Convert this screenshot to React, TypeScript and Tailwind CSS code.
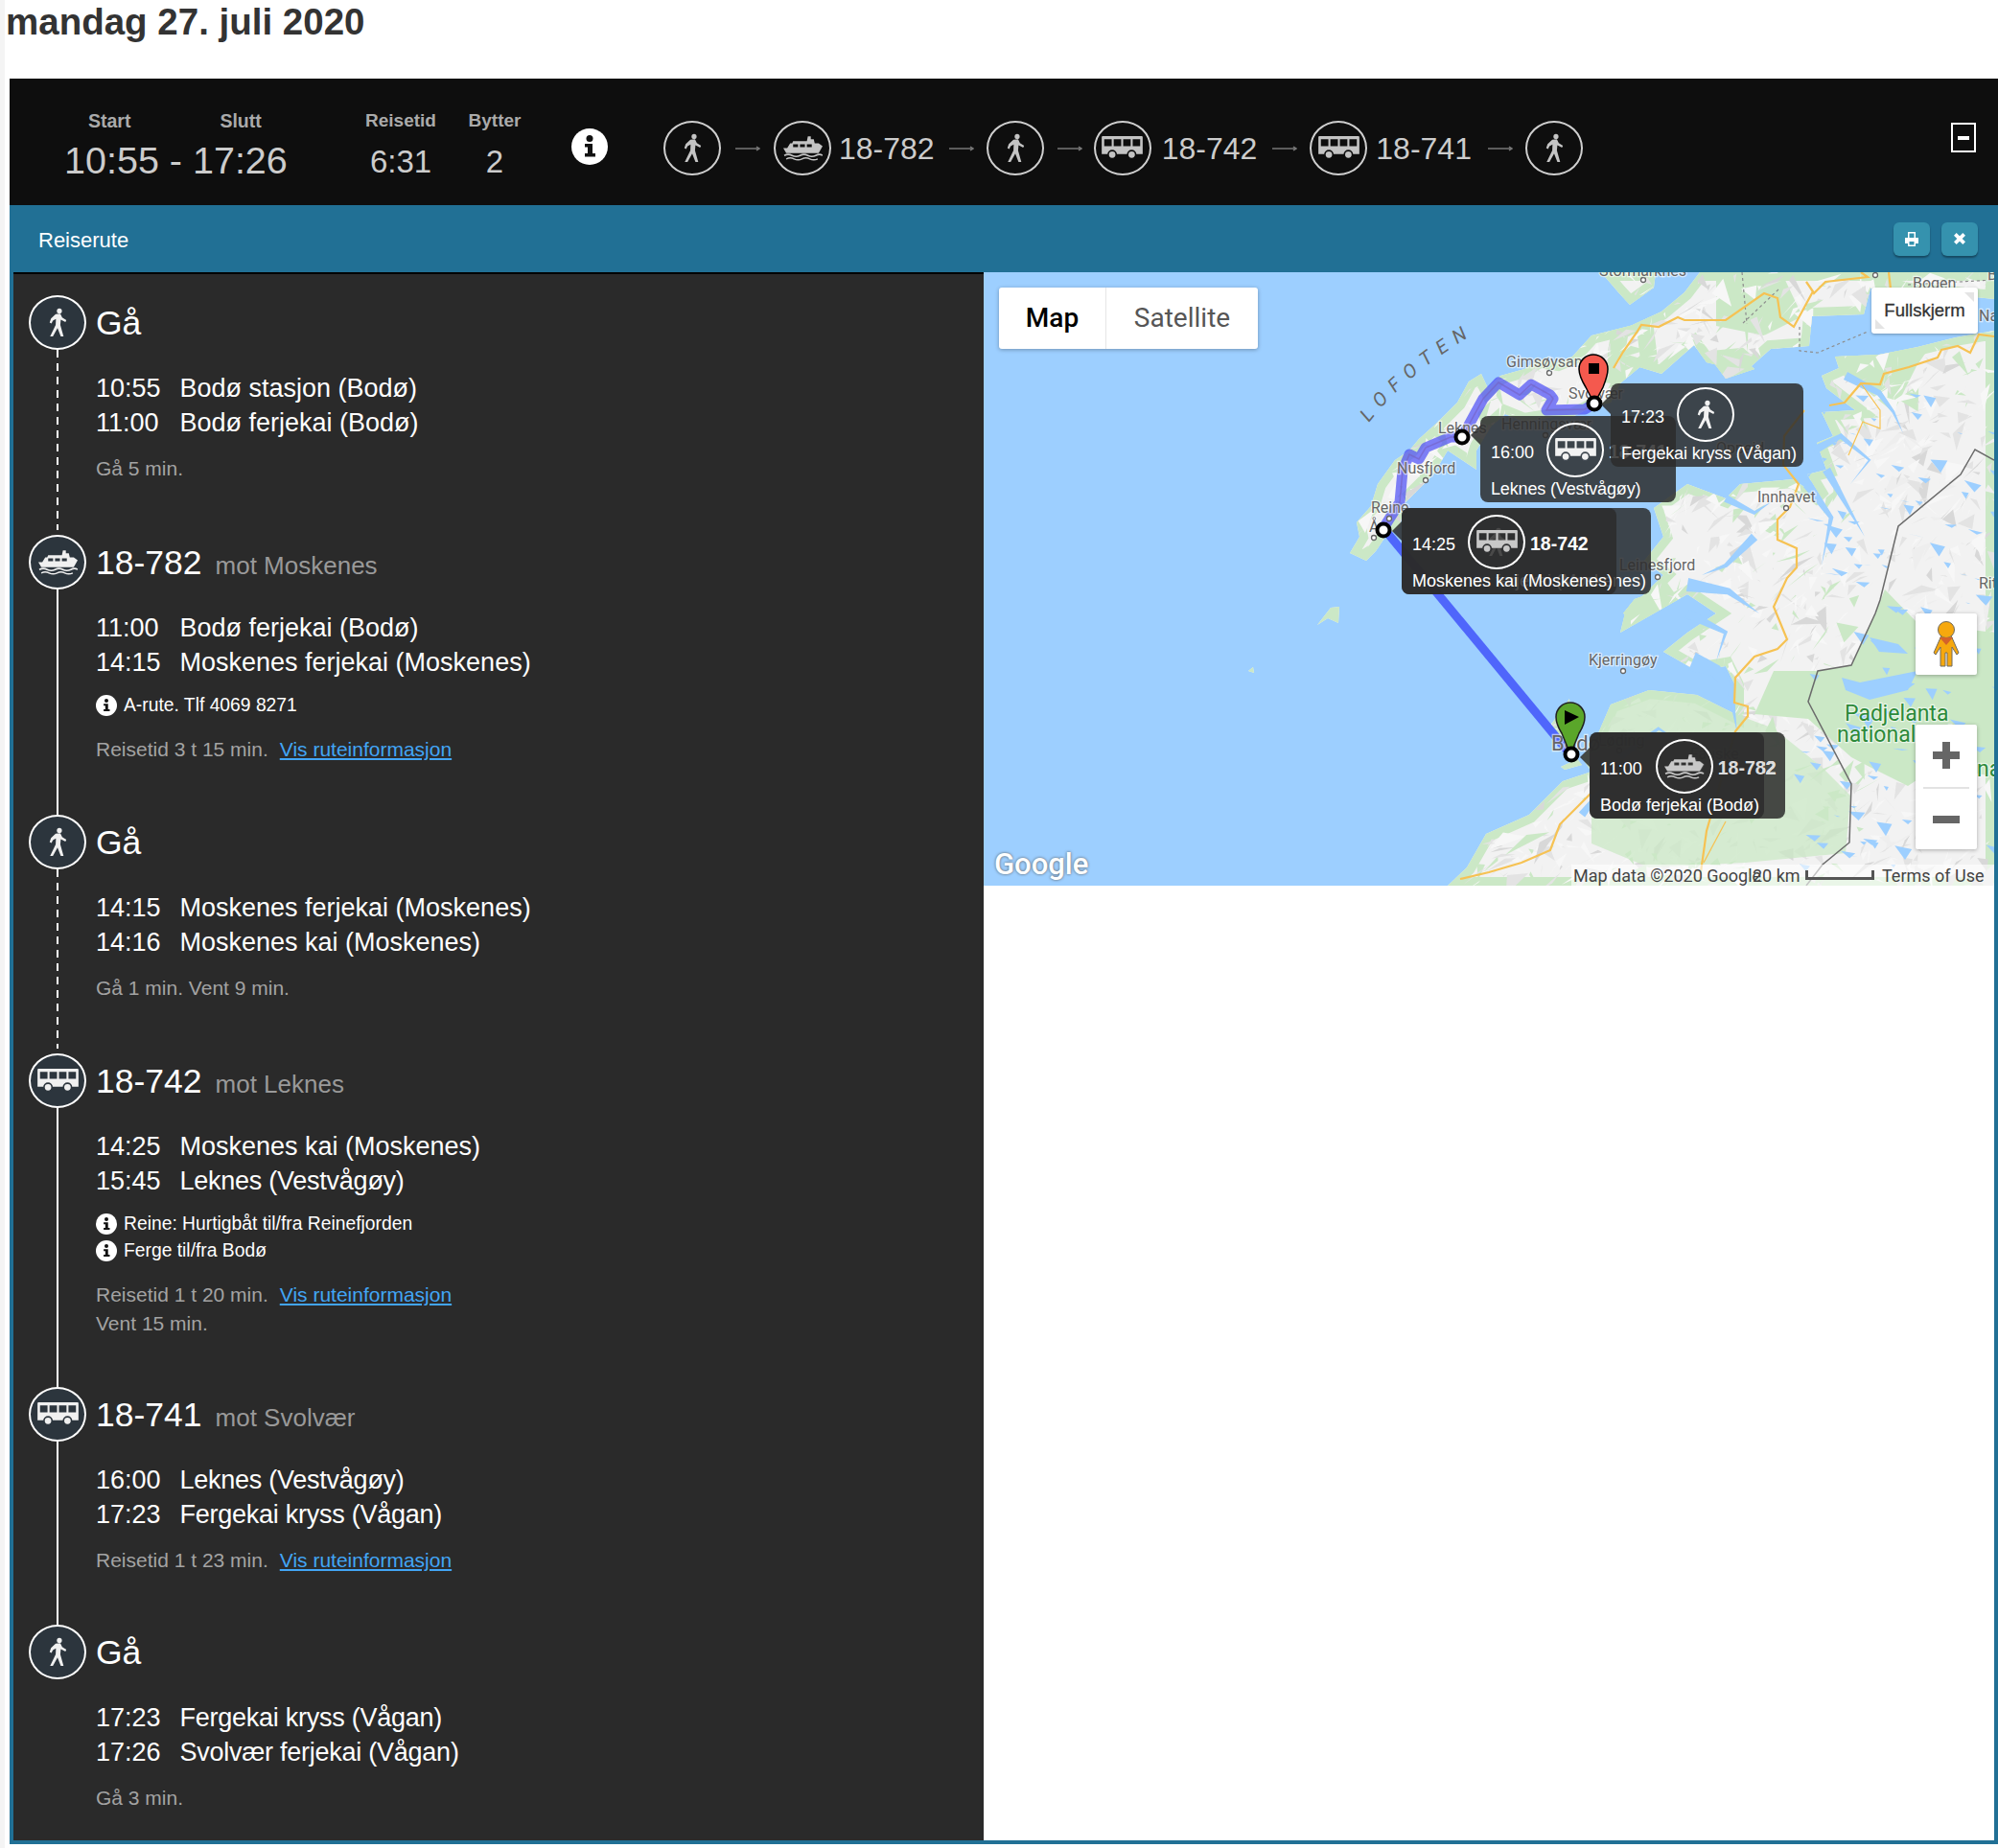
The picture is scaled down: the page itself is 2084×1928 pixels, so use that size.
import React from 'react';

type Pt = number[];

const mulberry = (seed: number) => () => {
  seed |= 0; seed = (seed + 0x6d2b79f5) | 0;
  let t = Math.imul(seed ^ (seed >>> 15), 1 | seed);
  t = (t + Math.imul(t ^ (t >>> 7), 61 | t)) ^ t;
  return ((t ^ (t >>> 14)) >>> 0) / 4294967296;
};

const pts = (p: Pt[]) => p.map((q) => q.join(',')).join(' ');

const inPoly = (x: number, y: number, poly: Pt[]) => {
  let inside = false;
  for (let i = 0, j = poly.length - 1; i < poly.length; j = i++) {
    const [xi, yi] = poly[i];
    const [xj, yj] = poly[j];
    if (yi > y !== yj > y && x < ((xj - xi) * (y - yi)) / (yj - yi) + xi) inside = !inside;
  }
  return inside;
};

// land, in page coordinates
const land: Pt[][] = [
  // Lofoten
  [[1408,577],[1418,560],[1415,545],[1430,528],[1437,505],[1455,480],[1470,470],[1480,458],[1500,440],[1520,420],[1532,398],[1545,390],[1552,405],[1565,392],[1590,385],[1605,375],[1625,378],[1640,372],[1660,350],[1680,345],[1700,340],[1715,335],[1720,375],[1690,400],[1680,420],[1660,425],[1640,435],[1620,435],[1590,440],[1570,432],[1555,445],[1540,470],[1540,490],[1525,480],[1510,470],[1495,495],[1480,510],[1465,525],[1460,550],[1445,560],[1435,575],[1425,585]],
  // Hinnøya
  [[1680,400],[1683,384],[1700,380],[1733,390],[1767,360],[1780,378],[1820,388],[1847,364],[1887,361],[1890,330],[1944,328],[1951,301],[1975,300],[1990,304],[2040,308],[2080,312],[2080,284],[1773,284],[1757,305],[1733,325],[1690,345]],
  // Mainland
  [[2080,345],[2040,352],[2000,362],[1960,370],[1914,372],[1918,384],[1900,392],[1905,405],[1935,428],[1900,430],[1912,455],[1895,462],[1905,490],[1885,495],[1900,520],[1870,500],[1815,505],[1800,520],[1760,505],[1725,530],[1735,560],[1715,585],[1735,600],[1695,640],[1690,660],[1760,620],[1790,640],[1760,660],[1735,680],[1770,700],[1800,695],[1810,715],[1810,745],[1770,725],[1720,720],[1680,735],[1665,770],[1650,790],[1660,805],[1630,815],[1595,850],[1550,870],[1530,905],[1510,924],[2080,924]],
  // islands
  [[1670,284],[1727,284],[1725,300],[1700,318],[1688,305]],
  [[1693,640],[1705,625],[1733,615],[1740,625],[1710,645]],
  [[1374,652],[1388,634],[1397,633],[1396,650],[1385,645]],
  [[1302,700],[1307,696],[1308,702]],
  [[1617,757],[1637,729],[1640,780],[1625,775]],
  [[1628,800],[1645,792],[1650,798],[1632,803]],
  [[1785,375],[1815,372],[1830,385],[1800,395]],
];

const padjelanta: Pt[] = [[1896,700],[1931,694],[1956,640],[1966,615],[2000,650],[2080,660],[2080,810],[2020,800],[1990,820],[1950,800],[1931,790],[1886,750],[1830,745],[1850,700]];
const bodoGreen: Pt[] = [[1680,735],[1720,720],[1770,725],[1810,745],[1850,760],[1900,800],[1930,830],[1925,890],[1820,900],[1720,905],[1660,880],[1660,820],[1650,790]];
const northGreen: Pt[] = [[1790,290],[1860,288],[1880,330],[1840,350],[1790,340]];
const midGreen: Pt[] = [[1914,372],[1990,360],[2005,370],[1975,430],[1950,410],[1925,395]];

const water = '#9dcfff';

const terrain = (() => {
  const r = mulberry(11);
  const out: { p: string; c: string }[] = [];
  for (let i = 0; i < 2600; i++) {
    const x = 1400 + r() * 680;
    const y = 284 + r() * 640;
    const k = r();
    if (!land.some((l) => inPoly(x, y, l))) continue;
    const s = 5 + r() * 20;
    const p = pts([[x, y], [x + s * (r() - 0.5) * 2, y + s * r()], [x + s * r(), y - s * (r() - 0.3)]]);
    const east = x > 1945 && y > 420;
    const c = k < 0.3 ? '#e3e3e3' : k < 0.4 ? '#d8d8d8' : k < 0.8 ? '#f7f7f7' : east ? '#eeeeee' : '#cbe8c6';
    out.push({ p, c });
  }
  return out;
})();

const lakes = (() => {
  const r = mulberry(29);
  const out: string[] = [];
  for (let i = 0; i < 120; i++) {
    const x = 1870 + r() * 210;
    const y = 410 + r() * 500;
    const s = 5 + r() * 13;
    out.push(pts([[x, y], [x + s, y + s * 0.3 * r()], [x + s * 0.6, y + s * r()]]));
  }
  return out;
})();

// a fjord narrows from its mouth to nothing
const taper = (line: Pt[], w: number) => {
  const left: Pt[] = [];
  const right: Pt[] = [];
  line.forEach(([x, y], i) => {
    const [ax, ay] = line[Math.max(0, i - 1)];
    const [bx, by] = line[Math.min(line.length - 1, i + 1)];
    const len = Math.hypot(bx - ax, by - ay) || 1;
    const h = (w / 2) * (1 - i / (line.length - 1));
    left.push([x - ((by - ay) / len) * h, y + ((bx - ax) / len) * h]);
    right.unshift([x + ((by - ay) / len) * h, y - ((bx - ax) / len) * h]);
  });
  return pts([...left, ...right]);
};

const fjords: { line: Pt[]; w: number }[] = [
  { line: [[1925,392],[1960,410],[1975,430],[1985,452]], w: 9 },
  { line: [[1892,470],[1920,455],[1950,480],[1930,505]], w: 9 },
  { line: [[1905,490],[1925,525],[1945,560]], w: 9 },
  { line: [[1885,505],[1910,540],[1900,590]], w: 10 },
  { line: [[1800,520],[1830,535],[1850,522]], w: 8 },
  { line: [[1760,610],[1803,617],[1835,640]], w: 14 },
  { line: [[1760,640],[1800,660],[1790,690]], w: 10 },
  { line: [[1765,690],[1790,700],[1805,720],[1812,765]], w: 20 },
  { line: [[1690,790],[1730,760],[1760,780]], w: 7 },
  { line: [[1830,560],[1800,590],[1775,600]], w: 9 },
  { line: [[1650,850],[1670,825],[1690,830]], w: 8 },
];

const roads = [
  'M1683,384 L1693,367 L1707,347 L1712,339 L1730,341 L1750,331 L1757,334 L1800,334 L1840,306 L1854,311 L1857,331 L1871,341 L1891,304 L1884,294 L1892,306 L1904,294 L1948,289 L1941,284',
  'M1970,284 L1972,301',
  'M1908,423 L1924,420 L1941,400 L1961,401 L1965,390 L1991,383 L2021,373 L2025,365 L2042,361 L2055,368 L2064,349 L2080,351',
  'M1882,428 L1861,455 L1860,485 L1876,505 L1867,529 L1854,542 L1854,563 L1874,572 L1874,592 L1864,603 L1850,633 L1864,667 L1854,677 L1830,685 L1810,707 L1809,733 L1823,737 L1823,747 L1810,763 L1780,867 L1773,917',
  'M1660,827 L1627,860 L1617,887 L1587,900 L1553,910 L1523,917',
];
const thinRoads = ['M1941,400 L1961,428 L1961,447 L1943,440 L1928,475', 'M1800,857 L1777,900'];
const dotted = ['M1817,284 L1822,338', 'M1855,302 L1817,338', 'M1877,341 L1877,366 L1896,368 L1948,346', 'M1990,297 L2080,292'];

const labels: [string, number, number][] = [
  ['Bogen', 1995, 301], ['Gimsøysan', 1571, 383], ['Svolvær', 1636, 416], ['Leknes', 1500, 452],
  ['Henningsvær', 1566, 448], ['Nusfjord', 1457, 494], ['Reine', 1430, 535], ['Å', 1428, 555],
  ['Innhavet', 1833, 524], ['Leinesfjord', 1689, 595], ['Kjerringøy', 1657, 694], ['Løding', 1667, 778],
  ['Oppeid', 1790, 473], ['Fauske', 1763, 792], ['Na', 2064, 335], ['Rit', 2064, 614], ['Stormarknes', 1668, 288], ['B', 2073, 292],
];
const dots: Pt[] = [[1616,389],[1487,501],[1612,454],[1729,602],[1863,530],[1693,700],[1714,292],[1449,541],[1433,561],[1689,783],[1956,287]];

function Walk({ className }: { className: string }) {
  return (
    <svg viewBox="0 0 20 32" className={className} fill="currentColor">
      <circle cx="12" cy="3.500" r="2.700" />
      <path d="M8 7L13 6.500L15 10.500L19.500 13.500L18.500 15.500L13.500 13L13 18.500L16.500 31L13.500 31L10 22L5 31L2 31L8 18.500L8.300 12L5 14L3.500 17L1.500 16L3 11.500Z" />
    </svg>
  );
}

function Bus({ className, bg }: { className: string; bg: string }) {
  return (
    <svg viewBox="0 0 41 24" className={className} fill="currentColor">
      <path
        fillRule="evenodd"
        d="M1 0H40A1 1 0 0 1 41 1V18H0V1A1 1 0 0 1 1 0ZM2.500 3V10H10V3ZM12 3V10H19.500V3ZM21.500 3V10H29V3ZM31 3V10H38.500V3Z"
      />
      <circle cx="10.500" cy="18.500" r="4" stroke={bg} strokeWidth="1.500" />
      <circle cx="30" cy="18.500" r="4" stroke={bg} strokeWidth="1.500" />
    </svg>
  );
}

function Ferry({ className }: { className: string }) {
  return (
    <svg viewBox="0 0 40 26" className={className} fill="currentColor">
      <path
        fillRule="evenodd"
        d="M25 1H28V4H31L32 8H36L40 11L36 18H3L0 13H4L7 8H9L10 6H24ZM10 9V12H15V9ZM17 9V12H22V9ZM24 9V12H29V9Z"
      />
      <path d="M1 20.500Q5 18.500 9 20.500T17 20.500T25 20.500T33 20.500T40 20.500" fill="none" stroke="currentColor" strokeWidth="1.600" />
      <path d="M3 24Q7 22 11 24T19 24T27 24T35 24" fill="none" stroke="currentColor" strokeWidth="1.400" />
    </svg>
  );
}

function Info({ className }: { className: string }) {
  return (
    <svg viewBox="0 0 38 38" className={className}>
      <circle cx="19" cy="19" r="19" fill="#fff" />
      <circle cx="19" cy="10.500" r="3.500" fill="#111" />
      <path d="M14 16H22V26H25V29.500H14V26H17V19.500H14Z" fill="#111" />
    </svg>
  );
}

function Circle({ kind, className, bg }: { kind: string; className: string; bg: string }) {
  return (
    <div className={`flex h-[57px] w-[60px] shrink-0 items-center justify-center rounded-[50%] border-2 ${className}`}>
      {kind === 'walk' && <Walk className="h-[31px] w-[20px] blur-[0.5px]" />}
      {kind === 'bus' && <Bus className="h-[25px] w-[43px] blur-[0.3px]" bg={bg} />}
      {kind === 'ferry' && <Ferry className="h-[27px] w-[41px] blur-[0.3px]" />}
    </div>
  );
}

function Arrow({ className }: { className: string }) {
  return (
    <svg viewBox="0 0 26 8" className={`h-[8px] w-[26px] shrink-0 ${className}`}>
      <path d="M0 4H25M22 2L25 4L22 6" fill="none" stroke="#777" strokeWidth="1.500" />
    </svg>
  );
}

const routeCircle = 'border-[#cfcfcf] text-[#c4c4c4]';

function TopBar() {
  return (
    <div className="ml-[5px] flex h-[132px] bg-[#0e0e0e] text-[#cccccc]">
      <div className="ml-[57px] w-[233px] pt-[32px]">
        <div className="flex text-[19.500px] font-bold leading-[24px] text-[#aaaaaa]">
          <span className="ml-[25px]">Start</span>
          <span className="ml-[93px]">Slutt</span>
        </div>
        <div className="mt-[7px] whitespace-nowrap text-[39.500px] leading-[44px]">10:55 - 17:26</div>
      </div>
      <div className="ml-[81px] w-[74px] pt-[32px] text-center">
        <div className="text-[19px] font-bold leading-[24px] text-[#aaaaaa]">Reisetid</div>
        <div className="mt-[9px] text-[33px] leading-[44px]">6:31</div>
      </div>
      <div className="ml-[33px] w-[56px] pt-[32px] text-center">
        <div className="text-[19px] font-bold leading-[24px] text-[#aaaaaa]">Bytter</div>
        <div className="mt-[9px] text-[33px] leading-[44px]">2</div>
      </div>
      <Info className="ml-[52px] mt-[52px] h-[38px] w-[38px]" />
      <div className="ml-[58px] mt-[44px] flex h-[57px] items-center text-[32px]">
        <Circle kind="walk" className={routeCircle} bg="#0e0e0e" />
        <Arrow className="ml-[15px] mr-[14px]" />
        <Circle kind="ferry" className={routeCircle} bg="#0e0e0e" />
        <span className="ml-[8px] mr-[15px]">18-782</span>
        <Arrow className="mr-[13px]" />
        <Circle kind="walk" className={routeCircle} bg="#0e0e0e" />
        <Arrow className="ml-[14px] mr-[12px]" />
        <Circle kind="bus" className={routeCircle} bg="#0e0e0e" />
        <span className="ml-[11px] mr-[16px]">18-742</span>
        <Arrow className="mr-[13px]" />
        <Circle kind="bus" className={routeCircle} bg="#0e0e0e" />
        <span className="ml-[9px] mr-[17px]">18-741</span>
        <Arrow className="mr-[13px]" />
        <Circle kind="walk" className={routeCircle} bg="#0e0e0e" />
      </div>
      <div className="ml-auto mr-[23px] mt-[46px] flex h-[31px] w-[26px] items-center justify-center border-2 border-white">
        <div className="h-[4px] w-[12px] bg-white" />
      </div>
    </div>
  );
}

function TitleBar() {
  return (
    <div className="ml-[5px] flex h-[70px] items-center bg-[#217095] pl-[30px] pr-[21px] text-white">
      <span className="pt-[2px] text-[22px]">Reiserute</span>
      <div className="ml-auto flex gap-[12px]">
        <button className="flex h-[35px] w-[38px] items-center justify-center rounded-md bg-[#3592ae] shadow-[0_2px_2px_rgba(0,0,0,0.35)]">
          <svg viewBox="0 0 14 15" className="h-[15px] w-[14px]" fill="#fff">
            <path fillRule="evenodd" d="M3 0H11V6H14V12H11V15H3V12H0V6H3ZM4.500 1.500V6H9.500V1.500ZM4.500 10V13.500H9.500V10Z" />
          </svg>
        </button>
        <button className="flex h-[35px] w-[38px] items-center justify-center rounded-md bg-[#3592ae] shadow-[0_2px_2px_rgba(0,0,0,0.35)]">
          <svg viewBox="0 0 12 12" className="h-[14px] w-[14px]">
            <path d="M2 2L10 10M10 2L2 10" stroke="#fff" strokeWidth="3.200" />
          </svg>
        </button>
      </div>
    </div>
  );
}

interface Step {
  kind: string;
  title: string;
  toward?: string;
  stops: string[][];
  infos?: string[];
  note: string;
  link?: boolean;
  extra?: string;
  height: string;
}

const steps: Step[] = [
  { kind: 'walk', title: 'Gå', height: 'h-[250px]', stops: [['10:55', 'Bodø stasjon (Bodø)'], ['11:00', 'Bodø ferjekai (Bodø)']], note: 'Gå 5 min.' },
  { kind: 'ferry', title: '18-782', toward: 'mot Moskenes', height: 'h-[292px]', stops: [['11:00', 'Bodø ferjekai (Bodø)'], ['14:15', 'Moskenes ferjekai (Moskenes)']], infos: ['A-rute. Tlf 4069 8271'], note: 'Reisetid 3 t 15 min.', link: true },
  { kind: 'walk', title: 'Gå', height: 'h-[249px]', stops: [['14:15', 'Moskenes ferjekai (Moskenes)'], ['14:16', 'Moskenes kai (Moskenes)']], note: 'Gå 1 min. Vent 9 min.' },
  { kind: 'bus', title: '18-742', toward: 'mot Leknes', height: 'h-[348px]', stops: [['14:25', 'Moskenes kai (Moskenes)'], ['15:45', 'Leknes (Vestvågøy)']], infos: ['Reine: Hurtigbåt til/fra Reinefjorden', 'Ferge til/fra Bodø'], note: 'Reisetid 1 t 20 min.', link: true, extra: 'Vent 15 min.' },
  { kind: 'bus', title: '18-741', toward: 'mot Svolvær', height: 'h-[248px]', stops: [['16:00', 'Leknes (Vestvågøy)'], ['17:23', 'Fergekai kryss (Vågan)']], note: 'Reisetid 1 t 23 min.', link: true },
  { kind: 'walk', title: 'Gå', height: 'h-[224px]', stops: [['17:23', 'Fergekai kryss (Vågan)'], ['17:26', 'Svolvær ferjekai (Vågan)']], note: 'Gå 3 min.' },
];

function StepRow({ step, last }: { step: Step; last: boolean }) {
  const dashed = step.kind === 'walk';
  return (
    <div className={`flex ${step.height}`}>
      <div className="flex w-[60px] shrink-0 flex-col items-center">
        <Circle kind={step.kind} className="border-white bg-[#2c353d] text-[#f0f0f0]" bg="#2c353d" />
        {!last && dashed && (
          <div className="mb-[5px] w-[2px] flex-1 bg-[repeating-linear-gradient(to_bottom,#ffffff_0,#ffffff_8px,transparent_8px,transparent_14px)]" />
        )}
        {!last && !dashed && <div className="w-[2px] flex-1 bg-white" />}
      </div>
      <div className="ml-[10px] text-white">
        <div className="flex h-[57px] items-baseline pt-[1px] text-[35.500px] leading-[57px]">
          <span>{step.title}</span>
          {step.toward && <span className="ml-[14px] text-[26px] text-[#999999]">{step.toward}</span>}
        </div>
        <div className="mt-[22px] text-[27px] leading-[36px]">
          {step.stops.map((s) => (
            <div key={s[0] + s[1]} className="flex">
              <span className="w-[87.500px]">{s[0]}</span>
              <span className={s[1].includes('V') ? 'tracking-[-0.25px]' : ''}>{s[1]}</span>
            </div>
          ))}
        </div>
        {step.infos && (
          <div className="mt-[13px] text-[19.300px] leading-[28px]">
            {step.infos.map((t) => (
              <div key={t} className="flex items-center">
                <Info className="mr-[7px] h-[22px] w-[22px]" />
                <span>{t}</span>
              </div>
            ))}
          </div>
        )}
        <div className={`${step.infos ? 'mt-[17px]' : 'mt-[15px]'} text-[21px] leading-[30px] text-[#a3a3a3]`}>
          <div>
            {step.note}
            {step.link && <a className="ml-[12px] text-[#42a5f5] underline">Vis ruteinformasjon</a>}
          </div>
          {step.extra && <div>{step.extra}</div>}
        </div>
      </div>
    </div>
  );
}

function Marker({ x, y }: { x: number; y: number }) {
  return <circle cx={x} cy={y} r="6.500" fill="#fff" stroke="#000" strokeWidth="4" />;
}

function MapDrawing() {
  const lofoten = 'M1663,421 L1653,427 L1613,428 L1620,416 L1617,412 L1597,401 L1585,412 L1563,399 L1547,416 L1525,456 L1513,456 L1487,467 L1480,479 L1470,474 L1463,491 L1460,524 L1443,551';
  return (
    <svg viewBox="1026 284 1054 640" className="block h-full w-full font-['Roboto',sans-serif]">
      <defs>
        <clipPath id="land">
          {land.map((l, i) => <polygon key={i} points={pts(l)} />)}
        </clipPath>
      </defs>
      <rect x="1026" y="284" width="1054" height="640" fill={water} />
      {land.map((l, i) => <polygon key={i} points={pts(l)} fill="#f2f2f2" />)}
      <g clipPath="url(#land)">
        {land.map((l, i) => <polygon key={i} points={pts(l)} fill="none" stroke="#cbe8c6" strokeWidth="18" />)}
        <polygon points={pts(northGreen)} fill="#cbe8c6" />
        <polygon points={pts(midGreen)} fill="#cbe8c6" />
        {terrain.map((t, i) => <polygon key={i} points={t.p} fill={t.c} />)}
        <polygon points={pts(padjelanta)} fill="#cbe8c6" />
        <polygon points={pts(bodoGreen)} fill="#cbe8c6" opacity="0.75" />
        {lakes.map((p, i) => <polygon key={i} points={p} fill={water} />)}
        <polygon points="1921,707 1940,712 2000,700 1990,720 1950,730 1925,720" fill={water} />
        <polygon points="1950,665 1980,672 1990,682 1960,680" fill={water} />
      </g>
      {fjords.map((f, i) => <polygon key={i} points={taper(f.line, f.w)} fill={water} />)}
      {dotted.map((d) => <path key={d} d={d} fill="none" stroke="#8d8d8d" strokeWidth="1.200" strokeDasharray="3 3" />)}
      {roads.map((d) => <path key={d} d={d} fill="none" stroke="#f6c253" strokeWidth="2.200" />)}
      {thinRoads.map((d) => <path key={d} d={d} fill="none" stroke="#f6c253" strokeWidth="1.200" />)}
      <path d="M2080,480 L2060,469 L2045,495 L1980,549 L1961,626 L1956,640 L1931,694 L1896,700 L1886,732 L1931,818 L1929,879 L1901,902 L1884,924" fill="none" stroke="#6b6b6b" strokeWidth="1.500" />
      <path d="M1443,551 L1638,787" stroke="#4f66fb" strokeWidth="9" fill="none" />
      <path d={lofoten} stroke="#4f50f5" strokeOpacity="0.72" strokeWidth="11" fill="none" strokeLinejoin="round" />
      <path d={lofoten} stroke="#7560c0" strokeOpacity="0.6" strokeWidth="1.500" fill="none" />
      {dots.map((d) => <circle key={d.join()} cx={d[0]} cy={d[1]} r="2.500" fill="#fff" stroke="#666" strokeWidth="1.300" />)}
      <g fontSize="16" fill="#666" stroke="#fff" strokeOpacity="0.6" strokeWidth="2.500" style={{ paintOrder: 'stroke' }}>
        {labels.map(([t, x, y]) => <text key={t} x={x} y={y}>{t}</text>)}
        <text x="1618" y="783" fontSize="22">Bodø</text>
        <g fontSize="23" fill="#2d8a3a">
          <text x="1924" y="752">Padjelanta</text>
          <text x="1916" y="774">nationalpark</text>
          <text x="2062" y="810">na</text>
        </g>
      </g>
      <path id="lofoten-arc" d="M1428,441 Q1470,385 1565,332" fill="none" />
      <text fontSize="20" fill="#666" fontStyle="italic" letterSpacing="9">
        <textPath href="#lofoten-arc">LOFOTEN</textPath>
      </text>
      {/* pins */}
      <path d="M1663,421 L1654,404 C1648,394 1647,389 1647,385 A15,15 0 1 1 1677,385 C1677,389 1676,394 1672,404 Z" fill="#f4594e" stroke="#000" strokeWidth="1.500" />
      <rect x="1657" y="379" width="11" height="11" fill="#000" />
      <path d="M1638,787 L1629,765 C1624,757 1623,752 1623,748 A15,15 0 1 1 1653,748 C1653,752 1652,757 1647,765 Z" fill="#5aa62a" stroke="#222" strokeWidth="1.500" />
      <path d="M1632,741 L1647,748 L1632,756 Z" fill="#000" />
      <Marker x={1443} y={553} />
      <Marker x={1525} y={456} />
      <Marker x={1663} y={421} />
      <Marker x={1639} y={787} />
    </svg>
  );
}

function Tip({ className, time, kind, route, station, arrow, dim, routeClass = '', bg = '#404850' }: { className: string; time: string; kind: string; route?: string; station: string; arrow?: string; dim?: boolean; routeClass?: string; bg?: string }) {
  return (
    <div className={`absolute rounded-lg bg-[#2b2b2b]/85 pl-[11px] pt-[7px] text-white ${className}`}>
      {arrow && <div className={`absolute left-[-10px] h-0 w-0 border-y-[10px] border-r-[10px] border-y-transparent border-r-[#2b2b2b]/85 ${arrow}`} />}
      <div className="flex h-[57px] items-center text-[18px]">
        <span className="mt-[5px] w-[44px]">{time}</span>
        <Circle kind={kind} className={`ml-[14px] border-white ${dim ? 'text-[#c8c8c8]' : 'text-[#f2f2f2]'}`} bg={bg} />
        {route && <span className={`ml-[5px] mt-[5px] shrink-0 whitespace-nowrap text-[19.500px] font-bold ${routeClass}`}>{route}</span>}
      </div>
      <div className={`mt-[1px] whitespace-nowrap text-[18px] leading-[22px] ${station.includes('V') ? 'tracking-[-0.15px]' : ''}`}>{station}</div>
    </div>
  );
}

function MapPanel() {
  return (
    <div className="relative h-[640px] overflow-hidden bg-[#9dcfff]">
      <MapDrawing />

      {/* tooltips sit on the map at their stop */}
      <Tip className="left-[518px] top-[150px] h-[90px] w-[204px]" time="16:00" kind="bus" route="18-741" station="Leknes (Vestvågøy)" arrow="top-[10px]" />
      <Tip className="left-[436px] top-[246px] h-[90px] w-[260px]" time="14:15" kind="walk" station="Moskenes ferjekai (Moskenes)" />
      <Tip className="left-[436px] top-[246px] h-[90px] w-[224px]" time="14:25" kind="bus" route="18-742" station="Moskenes kai (Moskenes)" arrow="top-[14px]" dim bg="#303133" />
      <Tip className="left-[654px] top-[116px] h-[87px] w-[201px] !pt-[4px]" time="17:23" kind="walk" station="Fergekai kryss (Vågan)" arrow="top-[12px]" />
      <Tip className="left-[632px] top-[480px] h-[90px] w-[204px]" time="11:00" kind="ferry" route="18-782" station="Bodø ferjekai (Bodø)" />
      <Tip className="left-[632px] top-[480px] h-[90px] w-[182px]" time="11:00" kind="ferry" route="18-782" routeClass="text-[#dddddd]" station="Bodø ferjekai (Bodø)" arrow="top-[16px]" dim />

      {/* map controls */}
      <div className="absolute left-[16px] top-[16px] flex h-[64px] w-[270px] rounded-[3px] bg-white font-['Roboto',sans-serif] text-[28px] shadow-[0_1px_4px_rgba(0,0,0,0.3)]">
        <div className="flex w-[112px] items-center justify-center border-r border-[#e6e6e6] font-medium text-black">Map</div>
        <div className="flex flex-1 items-center justify-center text-[#565656]">Satellite</div>
      </div>
      <div className="absolute left-[926px] top-[16px] flex h-[48px] w-[111px] items-center justify-center rounded-[3px] bg-white text-[18.500px] text-[#333333] shadow-[0_1px_3px_rgba(0,0,0,0.3)] [-webkit-text-stroke:0.3px_#333333]">
        Fullskjerm
        <div className="absolute right-[4px] top-[5px] h-0 w-0 border-l-[10px] border-t-[10px] border-l-transparent border-t-[#e4e4e4]" />
        <div className="absolute bottom-[5px] left-[4px] h-0 w-0 border-b-[10px] border-r-[10px] border-b-[#e4e4e4] border-r-transparent" />
      </div>
      <div className="absolute left-[972px] top-[356px] flex h-[64px] w-[64px] items-center justify-center rounded-[2px] bg-white shadow-[0_1px_4px_rgba(0,0,0,0.3)]">
        <svg viewBox="0 0 28 48" className="h-[48px] w-[28px]">
          <path d="M9 15H19L27 33L25 35L20 27V47H15V33H13V47H8V27L3 35L1 33Z" fill="#f6a80e" stroke="#6f6a60" strokeWidth="1" />
          <circle cx="14" cy="9" r="8.500" fill="#f6a80e" stroke="#6f6a60" strokeWidth="1" />
          <path d="M7 17L21 17L14 25Z" fill="#d4622a" />
        </svg>
      </div>
      <div className="absolute left-[972px] top-[472px] flex h-[130px] w-[64px] flex-col items-center rounded-[2px] bg-white shadow-[0_1px_4px_rgba(0,0,0,0.3)]">
        <div className="relative mt-[18px] h-[28px] w-[28px]">
          <div className="absolute left-0 top-[10px] h-[8px] w-[28px] bg-[#666666]" />
          <div className="absolute left-[10px] top-0 h-[28px] w-[8px] bg-[#666666]" />
        </div>
        <div className="mt-[19px] h-[2px] w-[48px] bg-[#e3e3e3]" />
        <div className="mt-[28px] h-[8px] w-[28px] bg-[#666666]" />
      </div>

      <div className="absolute bottom-[4px] left-[11px] font-['Roboto',sans-serif] text-[31px] font-medium leading-[36px] text-white [text-shadow:0_0_3px_#555]">Google</div>
      <div className="absolute bottom-0 left-[613px] right-0 flex h-[22px] items-center whitespace-nowrap bg-white/60 pl-[2px] font-['Roboto',sans-serif] text-[18px] text-[#444444]">
        <span className="w-[187px]">Map data ©2020 Google</span>
        <span className="w-[55px]">20 km</span>
        <span className="h-[10px] w-[72px] border-x-[3px] border-b-[3px] border-[#555555]" />
        <span className="ml-[8px]">Terms of Use</span>
      </div>
    </div>
  );
}

export default function App() {
  return (
    <div className="min-h-[1928px] border-l-[5px] border-[#f4f4f4] bg-white font-['Liberation_Sans',sans-serif]">
      <div className="h-[82px] pl-[1px] text-[38.500px] font-bold leading-[46px] text-[#333333]">mandag 27. juli 2020</div>
      <TopBar />
      <TitleBar />
      <div className="ml-[5px] flex h-[1640px] border-x-4 border-b-4 border-[#217095]">
        <div className="w-[1012px] shrink-0 border-t-2 border-black bg-[#2a2a2a] pl-[16px] pt-[22px]">
          {steps.map((s, i) => (
            <StepRow key={i} step={s} last={i === steps.length - 1} />
          ))}
        </div>
        <div className="flex-1 bg-white">
          <MapPanel />
        </div>
      </div>
    </div>
  );
}
